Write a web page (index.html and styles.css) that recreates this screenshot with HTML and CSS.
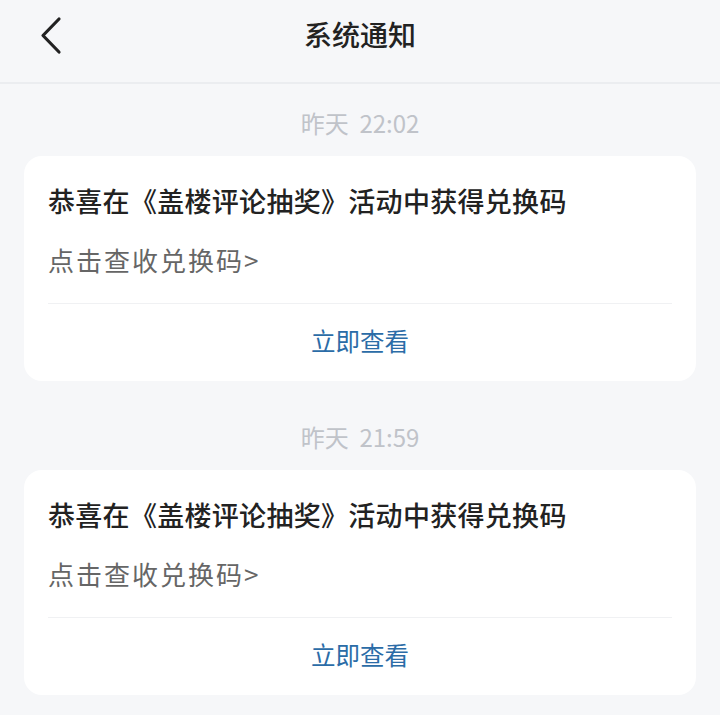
FILE: index.html
```html
<!DOCTYPE html>
<html lang="zh-CN">

<head>
  <meta charset="UTF-8">
  <meta name="viewport" content="width=device-width, initial-scale=1.0">
  <title>系统通知</title>

  <link rel="stylesheet" href="styles.css">
</head>

<body>
  <header class="top-bar">
    <span class="back">
      <svg width="24" height="40" viewBox="0 0 24 40">
        <path d="M19 3 L3 19.5 L19 36" fill="none" stroke="#222" stroke-width="3.2" stroke-linecap="round" stroke-linejoin="round" />
      </svg>
    </span>
    <h1>系统通知</h1>
  </header>

  <main class="list">
    <section class="notice">
      <p class="time">昨天&nbsp;&nbsp;22:02</p>
      <div class="card">
        <h2>恭喜在《盖楼评论抽奖》活动中获得兑换码</h2>
        <p class="desc">点击查收兑换码&gt;</p>
        <a class="more">立即查看</a>
      </div>
    </section>

    <section class="notice">
      <p class="time">昨天&nbsp;&nbsp;21:59</p>
      <div class="card">
        <h2>恭喜在《盖楼评论抽奖》活动中获得兑换码</h2>
        <p class="desc">点击查收兑换码&gt;</p>
        <a class="more">立即查看</a>
      </div>
    </section>
  </main>
</body>

</html>
```

FILE: styles.css
```css
* {
  margin: 0;
  padding: 0;
  box-sizing: border-box;
}

body {
  background: #f6f7f9;
  font-family: "Noto Sans CJK SC", "Noto Sans", sans-serif;
  width: 720px;
}

/* 상단 바 */
.top-bar {
  position: relative;
  height: 84px;
  border-bottom: 2px solid #ebedf0;
  display: flex;
  align-items: center;
  justify-content: center;
}

.top-bar h1 {
  font-size: 28px;
  font-weight: 500;
  color: #222;
  margin-top: -14px;
}

.back {
  position: absolute;
  left: 40px;
  top: 16px;
  display: block;
}

.back svg {
  display: block;
}

/* 목록 */
.list {
  padding: 0 24px;
}

.time {
  text-align: center;
  font-size: 24px;
  color: #c0c3c9;
  height: 72px;
  line-height: 78px;
}

.card {
  background: #fff;
  border-radius: 18px;
  padding: 0 24px;
  margin-bottom: 17px;
}

.card h2 {
  font-size: 27px;
  font-weight: 500;
  color: #222;
  line-height: 38px;
  padding-top: 26px;
  letter-spacing: 0.3px;
}

.desc {
  font-size: 26px;
  color: #666;
  line-height: 38px;
  padding-top: 21px;
  padding-bottom: 24px;
  letter-spacing: 2px;
  border-bottom: 1px solid #f0f1f3;
}

.more {
  display: block;
  text-align: center;
  font-size: 24.5px;
  color: #2b6ca7;
  height: 77px;
  line-height: 74px;
}
```
